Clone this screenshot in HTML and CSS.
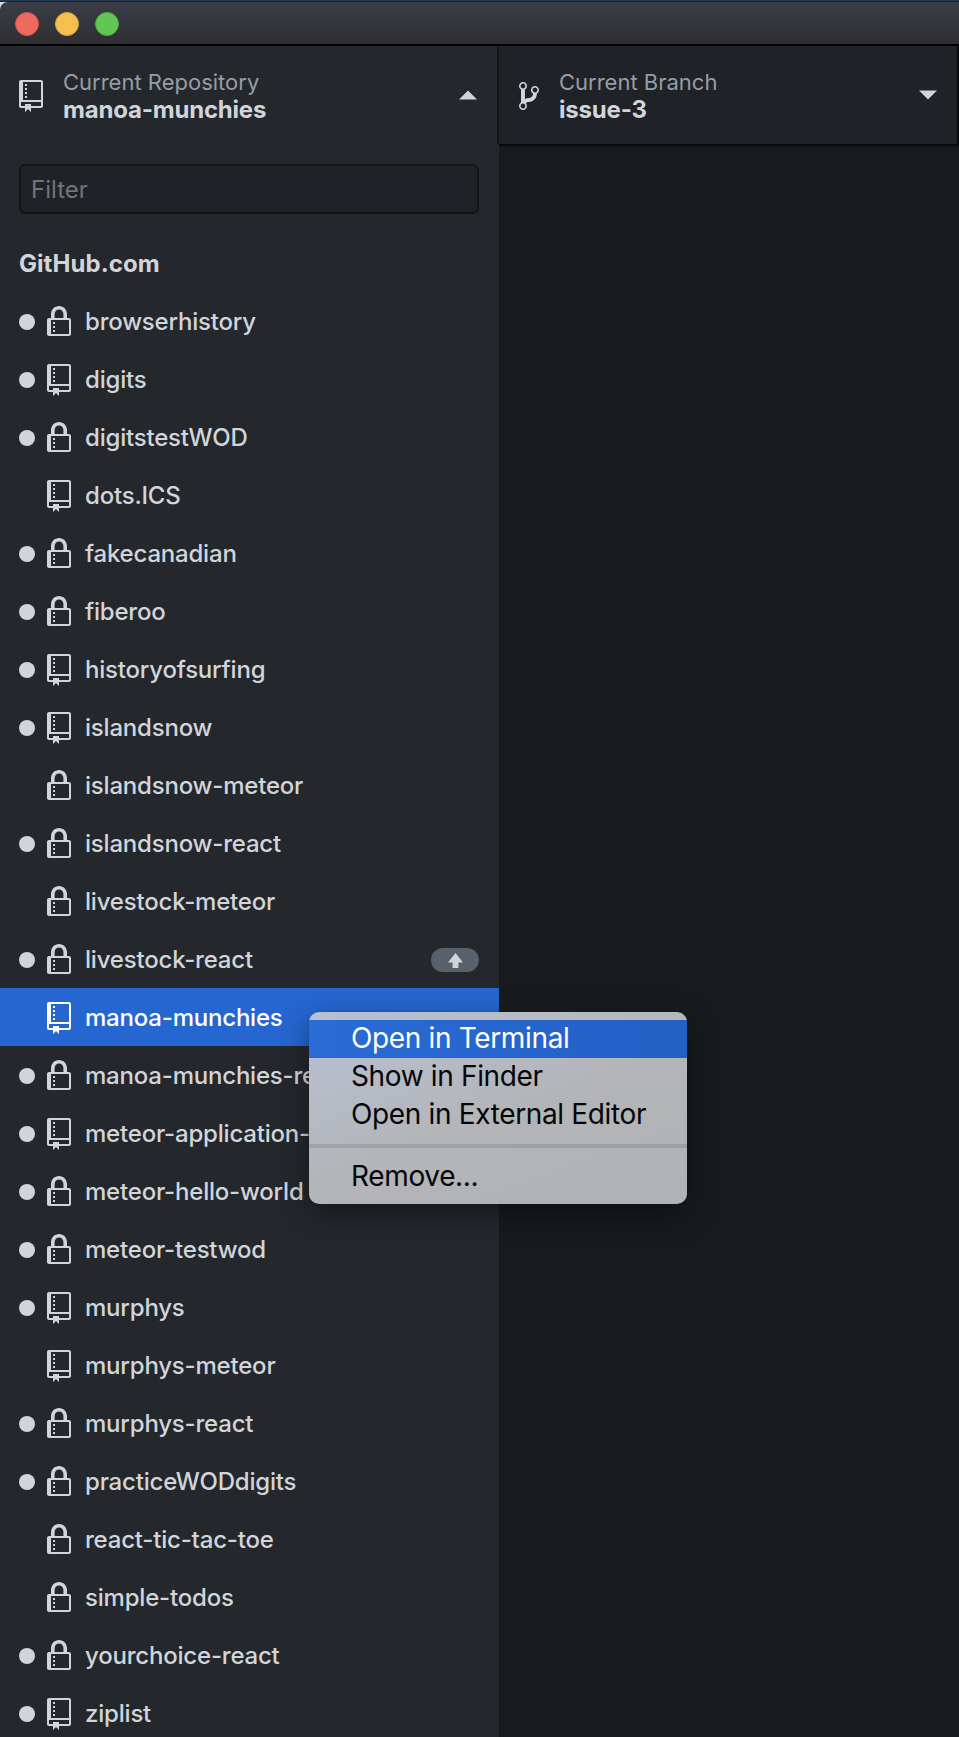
FILE: index.html
```html
<!DOCTYPE html>
<html lang="en">
<head>
<meta charset="utf-8">
<title>GitHub Desktop</title>
<link rel="stylesheet" href="styles.css">
</head>
<body>
<svg class="defs" aria-hidden="true">
  <symbol id="repo" viewBox="0 0 12 16"><path fill-rule="evenodd" d="M4 9H3V8h1v1zm0-3H3v1h1V6zm0-2H3v1h1V4zm0-2H3v1h1V2zm8-1v12c0 .55-.45 1-1 1H6v2l-1.5-1.5L3 16v-2H1c-.55 0-1-.45-1-1V1c0-.55.45-1 1-1h10c.55 0 1 .45 1 1zm-1 10H1v2h2v-1h3v1h5v-2zm0-10H2v9h9V1z"/></symbol>
  <symbol id="lock" viewBox="0 0 12 16"><path fill-rule="evenodd" d="M4 13H3v-1h1v1zm8-6v7c0 .55-.45 1-1 1H1c-.55 0-1-.45-1-1V7c0-.55.45-1 1-1h1V4c0-2.2 1.8-4 4-4s4 1.8 4 4v2h1c.55 0 1 .45 1 1zM3.8 6h4.41V4c0-1.22-.98-2.2-2.2-2.2-1.22 0-2.2.98-2.2 2.2v2H3.8zM11 7H2v7h9V7zM4 8H3v1h1V8zm0 2H3v1h1v-1z"/></symbol>
  <symbol id="branch" viewBox="0 0 10 16"><path fill-rule="evenodd" d="M10 5c0-1.11-.89-2-2-2a1.993 1.993 0 0 0-1 3.72v.3c-.02.52-.23.98-.63 1.38-.4.4-.86.61-1.38.63-.83.02-1.48.16-2 .45V4.72a1.993 1.993 0 0 0-1-3.72C.88 1 0 1.89 0 3a2 2 0 0 0 1 1.72v6.56c-.59.35-1 .99-1 1.72 0 1.11.89 2 2 2 1.11 0 2-.89 2-2 0-.53-.2-1-.53-1.36.09-.06.48-.41.59-.47.25-.11.56-.17.94-.17 1.05-.05 1.95-.45 2.75-1.25S8.95 7.77 9 6.73h-.02C9.59 6.37 10 5.73 10 5zM2 1.8c.66 0 1.2.55 1.2 1.2 0 .65-.55 1.2-1.2 1.2C1.35 4.2.8 3.65.8 3c0-.65.55-1.2 1.2-1.2zm0 12.41c-.66 0-1.2-.55-1.2-1.2 0-.65.55-1.2 1.2-1.2.65 0 1.2.55 1.2 1.2 0 .65-.55 1.2-1.2 1.2zm6-8c-.66 0-1.2-.55-1.2-1.2 0-.65.55-1.2 1.2-1.2.65 0 1.2.55 1.2 1.2 0 .65-.55 1.2-1.2 1.2z"/></symbol>
</svg>
<div class="window">
  <header class="titlebar"><i class="light close"></i><i class="light minimize"></i><i class="light expand"></i></header>
  <div class="main">
    <aside class="sidebar">
      <div class="tool repo-tool">
        <svg class="icon"><use href="#repo"/></svg>
        <div class="tool-text"><span class="label">Current Repository</span><strong class="value">manoa-munchies</strong></div>
        <svg class="caret" viewBox="0 0 18 10"><path d="M0 9.6L9 .4l9 9.2z"/></svg>
      </div>
      <div class="filter">Filter</div>
      <h2 class="group">GitHub.com</h2>
      <ul class="list">
        <li class="row"><i class="dot"></i><svg class="icon"><use href="#lock"/></svg><span>browserhistory</span></li>
        <li class="row"><i class="dot"></i><svg class="icon"><use href="#repo"/></svg><span>digits</span></li>
        <li class="row"><i class="dot"></i><svg class="icon"><use href="#lock"/></svg><span>digitstestWOD</span></li>
        <li class="row"><i class="dot clean"></i><svg class="icon"><use href="#repo"/></svg><span>dots.ICS</span></li>
        <li class="row"><i class="dot"></i><svg class="icon"><use href="#lock"/></svg><span>fakecanadian</span></li>
        <li class="row"><i class="dot"></i><svg class="icon"><use href="#lock"/></svg><span>fiberoo</span></li>
        <li class="row"><i class="dot"></i><svg class="icon"><use href="#repo"/></svg><span>historyofsurfing</span></li>
        <li class="row"><i class="dot"></i><svg class="icon"><use href="#repo"/></svg><span>islandsnow</span></li>
        <li class="row"><i class="dot clean"></i><svg class="icon"><use href="#lock"/></svg><span>islandsnow-meteor</span></li>
        <li class="row"><i class="dot"></i><svg class="icon"><use href="#lock"/></svg><span>islandsnow-react</span></li>
        <li class="row"><i class="dot clean"></i><svg class="icon"><use href="#lock"/></svg><span>livestock-meteor</span></li>
        <li class="row"><i class="dot"></i><svg class="icon"><use href="#lock"/></svg><span>livestock-react</span><b class="badge"><svg class="arrow" viewBox="0 0 15 15"><path d="M7.5 0L15 9.6h-4.6V15H4.6V9.6H0z"/></svg></b></li>
        <li class="row selected"><i class="dot clean"></i><svg class="icon"><use href="#repo"/></svg><span>manoa-munchies</span></li>
        <li class="row"><i class="dot"></i><svg class="icon"><use href="#lock"/></svg><span>manoa-munchies-react</span></li>
        <li class="row"><i class="dot"></i><svg class="icon"><use href="#repo"/></svg><span>meteor-application-</span></li>
        <li class="row"><i class="dot"></i><svg class="icon"><use href="#lock"/></svg><span>meteor-hello-world</span></li>
        <li class="row"><i class="dot"></i><svg class="icon"><use href="#lock"/></svg><span>meteor-testwod</span></li>
        <li class="row"><i class="dot"></i><svg class="icon"><use href="#repo"/></svg><span>murphys</span></li>
        <li class="row"><i class="dot clean"></i><svg class="icon"><use href="#repo"/></svg><span>murphys-meteor</span></li>
        <li class="row"><i class="dot"></i><svg class="icon"><use href="#lock"/></svg><span>murphys-react</span></li>
        <li class="row"><i class="dot"></i><svg class="icon"><use href="#lock"/></svg><span>practiceWODdigits</span></li>
        <li class="row"><i class="dot clean"></i><svg class="icon"><use href="#lock"/></svg><span>react-tic-tac-toe</span></li>
        <li class="row"><i class="dot clean"></i><svg class="icon"><use href="#lock"/></svg><span>simple-todos</span></li>
        <li class="row"><i class="dot"></i><svg class="icon"><use href="#lock"/></svg><span>yourchoice-react</span></li>
        <li class="row"><i class="dot"></i><svg class="icon"><use href="#repo"/></svg><span>ziplist</span></li>
      </ul>
    </aside>
    <section class="content">
      <div class="tool branch-tool">
        <svg class="icon branch-icon"><use href="#branch"/></svg>
        <div class="tool-text"><span class="label">Current Branch</span><strong class="value">issue-3</strong></div>
        <svg class="caret" viewBox="0 0 18 10"><path d="M0 .4h18L9 9.6z"/></svg>
      </div>
    </section>
  </div>
  <div class="menu">
    <div class="menu-item active">Open in Terminal</div>
    <div class="menu-item">Show in Finder</div>
    <div class="menu-item">Open in External Editor</div>
    <div class="separator"></div>
    <div class="menu-item">Remove...</div>
  </div>
</div>
</body>
</html>
```
FILE: styles.css
```css
* { box-sizing: border-box; }
body {
  margin: 0;
  background: #181b1e;
  color: #d1d5da;
  font: 24px/30px Inter, "Liberation Sans", sans-serif;
}
.defs { position: absolute; width: 0; height: 0; }
svg { fill: currentColor; flex: none; }
.window {
  position: relative;
  display: flex;
  flex-direction: column;
  height: 1737px;
  padding-top: 2px;
  overflow: hidden;
  background: linear-gradient(#283a56 1px, #1b2230 1px, #1b2230 2px, #d5d8da 2px);
}
.titlebar {
  flex: none;
  display: flex;
  align-items: center;
  gap: 16px;
  height: 44px;
  padding: 2px 15px 0;
  border-bottom: 2px solid #000;
  border-top-left-radius: 8px;
  background: linear-gradient(#3b3e46, #2e2e32);
}
.light { width: 24px; height: 24px; border-radius: 50%; border: 1px solid; }
.close { background: #ee6a5f; border-color: #d9524a; }
.minimize { background: #f5bf4f; border-color: #dda53b; }
.expand { background: #61c654; border-color: #50a93e; }
.main { flex: 1; display: flex; min-height: 0; }
.sidebar { width: 499px; flex: none; background: #24282d; }
.content { flex: 1; background: #181b1e; }
.tool { display: flex; align-items: center; height: 98px; }
.repo-tool { padding: 0 20px 0 19px; border-right: 2px solid #141414; }
.branch-tool {
  height: 100px;
  padding: 0 20px;
  background: #1f2226;
  border-bottom: 2px solid #0a0a0a;
  border-right: 2px solid #0a0a0a;
}
.icon { width: 24px; height: 32px; }
.tool .icon { margin-top: 2px; }
.branch-icon { width: 20px; }
.tool-text { flex: 1; margin: 2px 0 0 20px; }
.label, .value { display: block; line-height: 27px; white-space: nowrap; }
.label { font-size: 22px; color: #959da5; }
.value { font-weight: 700; letter-spacing: -0.2px; }
.caret { width: 18px; height: 10px; }
.filter {
  height: 50px;
  margin: 20px 20px 0 19px;
  padding: 9px 10px;
  border: 2px solid #141414;
  border-radius: 6px;
  background: #1f2226;
  color: #757575;
}
.group { margin: 35px 0 13px 19px; font-size: 24px; line-height: 30px; font-weight: 700; letter-spacing: 0.05px; }
.list { list-style: none; margin: 0; padding: 0; }
.row { display: flex; align-items: center; height: 58px; padding: 2px 20px 0 19px; white-space: nowrap; font-weight: 500; letter-spacing: -0.2px; }
.row span { flex: 1; }
.row .icon { margin: 0 14px 0 12px; }
.dot { width: 16px; height: 16px; border-radius: 50%; background: #d1d5da; flex: none; }
.clean { visibility: hidden; }
.selected { background: #2566d0; color: #fff; }
.badge { display: flex; align-items: center; justify-content: center; width: 48px; height: 24px; border-radius: 12px; background: #586069; }
.arrow { width: 15px; height: 15px; }
.menu {
  position: absolute;
  left: 309px;
  top: 1012px;
  width: 378px;
  height: 192px;
  padding: 8px 0;
  border-radius: 10px;
  background: linear-gradient(160deg, #b6c0d2 0%, #b6bbc7 25%, #b3b5b8 52%, #b1b2b4 100%);
  box-shadow: 0 0 1px rgba(0, 0, 0, .6), 0 10px 30px rgba(0, 0, 0, .42);
  color: #050608;
  font-size: 28px;
}
.menu-item { height: 38px; padding-left: 42px; line-height: 37px; white-space: nowrap; letter-spacing: -0.35px; }
.active { background: linear-gradient(90deg, #2a6bd6, #2360c4); color: #fff; }
.separator { height: 4px; margin: 10px 0; background: rgba(0, 0, 0, .1); }
```
